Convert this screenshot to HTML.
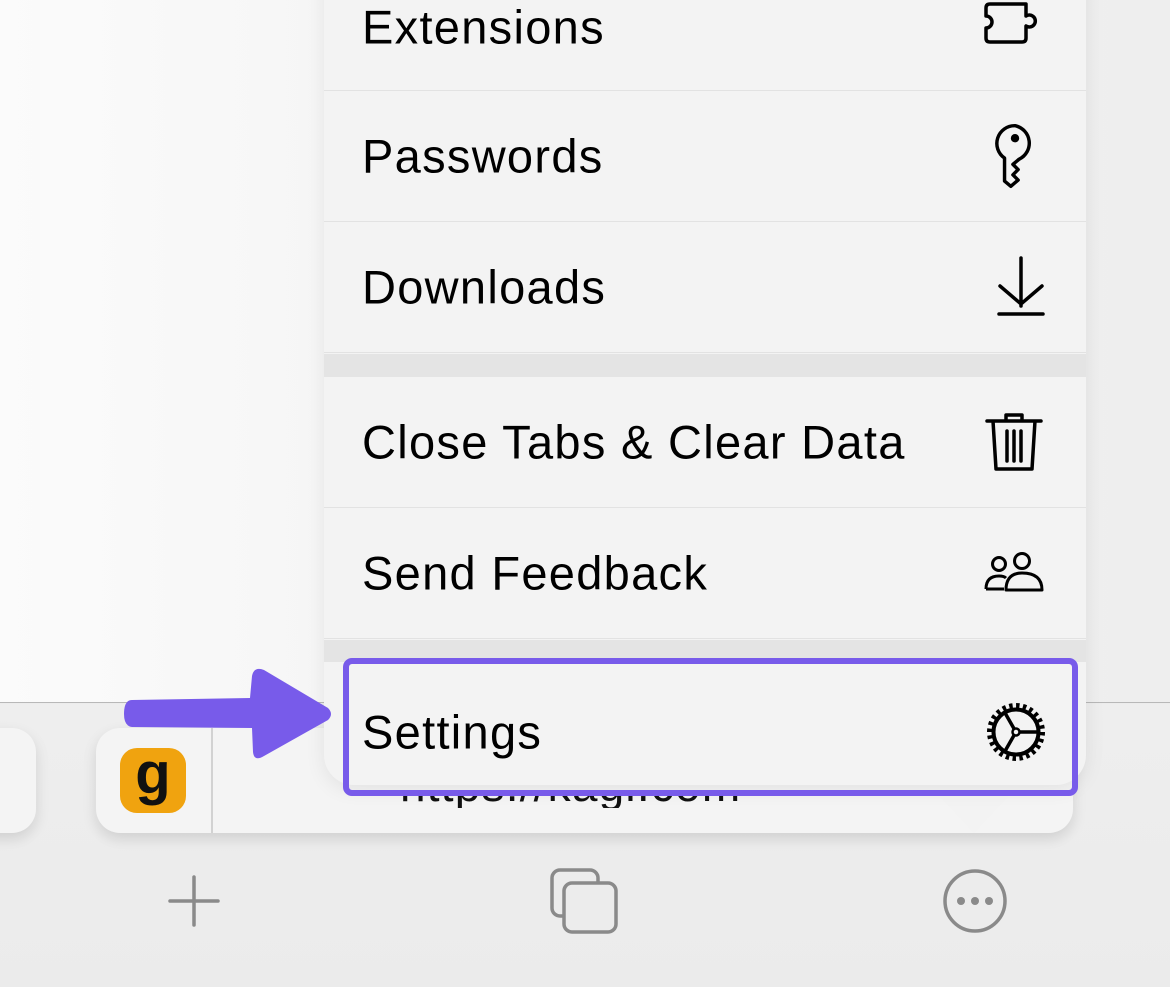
<!DOCTYPE html>
<html><head><meta charset="utf-8"><style>
*{margin:0;padding:0;box-sizing:border-box}
body{width:1170px;height:987px;overflow:hidden;position:relative;background:#ececec;font-family:"Liberation Sans",sans-serif}
.top{position:absolute;left:0;top:0;width:1170px;height:703px;background:linear-gradient(90deg,#fbfbfb 0%,#f4f4f4 40%,#eeeeee 100%);border-bottom:1px solid #b8b8b8}
.bottom{position:absolute;left:0;top:704px;width:1170px;height:283px;background:linear-gradient(180deg,#eeeeee,#ebebeb)}
.card{position:absolute;top:728px;height:105px;background:#f4f4f4;border-radius:24px;box-shadow:0 6px 14px rgba(0,0,0,.12)}
.url{position:absolute;left:400px;top:796px;height:12px;width:400px;overflow:hidden}
.url div{position:absolute;left:0;top:-38px;font-size:46px;letter-spacing:1.2px;color:#111;white-space:nowrap}
.menu{position:absolute;left:324px;top:-40px;width:762px;height:825px;background:#f3f3f3;border-radius:0 0 30px 30px;overflow:hidden;box-shadow:0 4px 20px rgba(0,0,0,.08)}
.row{position:absolute;left:0;width:762px;height:131px;border-bottom:1px solid #e2e2e2;font-size:47px;letter-spacing:1.3px;color:#000}
.row span{position:absolute;left:38px;top:50%;transform:translateY(-50%);white-space:nowrap}
.row svg{position:absolute;right:40px;top:50%;transform:translateY(-50%)}
.gap{position:absolute;left:0;width:762px;background:#e4e4e4}
.hl{position:absolute;left:343px;top:658px;width:735px;height:138px;border:6px solid #785bea;border-radius:9px}
</style></head><body>
<div class="top"></div>
<div class="bottom"></div>
<div class="card" style="left:-40px;width:76px"></div>
<div class="card" style="left:96px;width:977px">
  <div style="position:absolute;left:24px;top:20px;width:66px;height:65px;background:#f0a30f;border-radius:17px;font:bold 58px 'Liberation Sans',sans-serif;color:#111;text-align:center;line-height:52px">g</div>
  <div style="position:absolute;left:115px;top:0;width:2px;height:105px;background:#d2d2d2"></div>
</div>
<div class="url"><div>https://kagi.com</div></div>
<svg style="position:absolute;left:864px;top:790px" width="220" height="50"><path d="M70 0 L110 43 L150 0 Z" fill="#f3f3f3"/></svg>
<div class="menu">
  <div class="row" style="top:0"><span style="top:67px">Extensions</span>
    <svg style="top:67px" width="64" height="50" viewBox="0 0 64 50"><path d="M4 6 Q4 2 8 2 H44 V14 A6 6 0 1 1 44 24 V36 Q44 40 40 40 H8 Q4 40 4 36 V26 A6 6 0 1 0 4 14 Z" fill="none" stroke="#000" stroke-width="3.5" stroke-linejoin="round"/></svg></div>
  <div class="row" style="top:131px"><span>Passwords</span>
    <svg style="right:48px" width="46" height="72" viewBox="0 0 44 66"><path d="M22 4 A17 17 0 0 0 12 35 V57 L18 62 L25 56 L20 51 L25 46 L20 41 L26 36 A17 17 0 0 0 22 4 Z" fill="none" stroke="#000" stroke-width="3.3" stroke-linejoin="round"/><circle cx="22" cy="16" r="4" fill="#000"/></svg></div>
  <div class="row" style="top:262px"><span>Downloads</span>
    <svg width="50" height="62" viewBox="0 0 50 62"><path d="M25 2 V50 M4 30 L25 48 L46 30 M3 58 H47" fill="none" stroke="#000" stroke-width="3.5" stroke-linecap="round"/></svg></div>
  <div class="gap" style="top:394px;height:23px"></div>
  <div class="row" style="top:417px"><span>Close Tabs &amp; Clear Data</span>
    <svg style="right:42px" width="60" height="62" viewBox="0 0 60 62"><path d="M3 10 H57 M22 10 V4 H38 V10 M9 10 L12 58 H48 L51 10 M23 20 V50 M30 20 V50 M37 20 V50" fill="none" stroke="#000" stroke-width="3.5" stroke-linejoin="round" stroke-linecap="round"/></svg></div>
  <div class="row" style="top:548px"><span>Send Feedback</span>
    <svg width="64" height="44" viewBox="0 0 64 44"><circle cx="17" cy="13" r="6.5" fill="none" stroke="#000" stroke-width="3"/><circle cx="40" cy="10" r="7.5" fill="none" stroke="#000" stroke-width="3"/><path d="M4 38 Q4 25 17 25 Q22 25 24 27 M4 38 H22 M24 39 Q24 22 40 22 Q60 22 60 39 Z" fill="none" stroke="#000" stroke-width="3" stroke-linejoin="round"/></svg></div>
  <div class="gap" style="top:680px;height:22px"></div>
  <div class="row" style="top:702px;height:123px;border:none"><span style="top:70px">Settings</span>
    <svg style="top:70px;right:38px" width="64" height="64" viewBox="-32 -32 64 64"><circle r="26" fill="none" stroke="#000" stroke-width="6" stroke-dasharray="3.4 3.4"/><circle r="22.5" fill="none" stroke="#000" stroke-width="4"/><circle r="3.5" fill="none" stroke="#000" stroke-width="2.5"/><path d="M3.5 0 H23 M-1.8 -3 L-11.5 -20 M-1.8 3 L-11.5 20" stroke="#000" stroke-width="3.5"/></svg></div>
</div>
<div class="hl"></div>
<svg style="position:absolute;left:0;top:0" width="400" height="800"><path d="M132 700 L250 698 L252 676 Q254 666 264 670 L328 708 Q334 714 328 720 L264 756 Q254 762 253 752 L252 728 L132 727 Q124 726 124 714 Q124 700 132 700 Z" fill="#785bea"/></svg>
<svg style="position:absolute;left:166px;top:873px" width="56" height="56"><path d="M28 4 V52 M4 28 H52" stroke="#8a8a8a" stroke-width="3.5" stroke-linecap="round"/></svg>
<svg style="position:absolute;left:550px;top:867px" width="70" height="68"><rect x="2" y="3" width="46" height="46" rx="8" fill="none" stroke="#8a8a8a" stroke-width="3.5"/><rect x="14" y="16" width="52" height="49" rx="8" fill="#ececec" stroke="#8a8a8a" stroke-width="3.5"/></svg>
<svg style="position:absolute;left:941px;top:867px" width="68" height="68"><circle cx="34" cy="34" r="30" fill="none" stroke="#8a8a8a" stroke-width="3.5"/><circle cx="20" cy="34" r="4" fill="#8a8a8a"/><circle cx="34" cy="34" r="4" fill="#8a8a8a"/><circle cx="48" cy="34" r="4" fill="#8a8a8a"/></svg>
</body></html>
